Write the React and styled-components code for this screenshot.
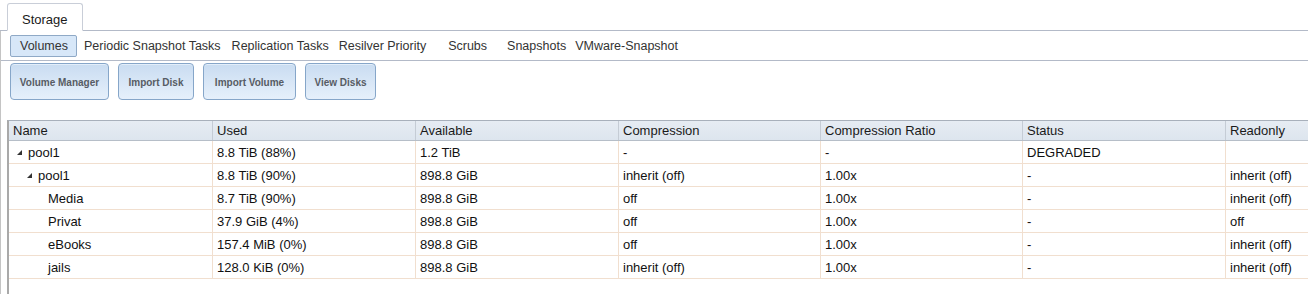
import React from "react";
import styled, { createGlobalStyle } from "styled-components";

const GlobalStyle = createGlobalStyle`
    html, body {
        margin: 0;
        padding: 0;
        background: #fff;
        overflow: hidden;
    }
    body {
        font-family: "Liberation Sans", Arial, sans-serif;
        color: #1a1a1a;
    }
`;

const subTabs = [
    { label: "Volumes", active: true, gap: 0 },
    { label: "Periodic Snapshot Tasks", gap: 2 },
    { label: "Replication Tasks", gap: 1 },
    { label: "Resilver Priority", gap: 0 },
    { label: "Scrubs", gap: 12 },
    { label: "Snapshots", gap: 10 },
    { label: "VMware-Snapshot", gap: -1 },
];

const buttons = [
    { label: "Volume Manager", width: 99 },
    { label: "Import Disk", width: 76 },
    { label: "Import Volume", width: 93 },
    { label: "View Disks", width: 71 },
];

const columns = [
    { key: "name", title: "Name", width: 204 },
    { key: "used", title: "Used", width: 203 },
    { key: "avail", title: "Available", width: 203 },
    { key: "comp", title: "Compression", width: 202 },
    { key: "ratio", title: "Compression Ratio", width: 202 },
    { key: "status", title: "Status", width: 203 },
    { key: "ro", title: "Readonly", width: 203 },
];

const rows = [
    { name: "pool1", level: 0, open: true, used: "8.8 TiB (88%)", avail: "1.2 TiB", comp: "-", ratio: "-", status: "DEGRADED", ro: "" },
    { name: "pool1", level: 1, open: true, used: "8.8 TiB (90%)", avail: "898.8 GiB", comp: "inherit (off)", ratio: "1.00x", status: "-", ro: "inherit (off)" },
    { name: "Media", level: 2, used: "8.7 TiB (90%)", avail: "898.8 GiB", comp: "off", ratio: "1.00x", status: "-", ro: "inherit (off)" },
    { name: "Privat", level: 2, used: "37.9 GiB (4%)", avail: "898.8 GiB", comp: "off", ratio: "1.00x", status: "-", ro: "off" },
    { name: "eBooks", level: 2, used: "157.4 MiB (0%)", avail: "898.8 GiB", comp: "off", ratio: "1.00x", status: "-", ro: "inherit (off)" },
    { name: "jails", level: 2, used: "128.0 KiB (0%)", avail: "898.8 GiB", comp: "inherit (off)", ratio: "1.00x", status: "-", ro: "inherit (off)" },
];

const gridCols = columns.map((c) => `${c.width}px`).join(" ");

export default function App() {
    return (
        <>
            <GlobalStyle />
            <TabStrip>
                <MainTab>Storage</MainTab>
            </TabStrip>
            <Panel>
                <SubTabBar>
                    {subTabs.map((t) => (
                        <SubTab key={t.label} $active={t.active} $gap={t.gap}>
                            {t.label}
                        </SubTab>
                    ))}
                </SubTabBar>
                <Toolbar>
                    {buttons.map((b) => (
                        <ActionButton key={b.label} $width={b.width}>
                            {b.label}
                        </ActionButton>
                    ))}
                </Toolbar>
                <Grid>
                    <HeaderRow $cols={gridCols}>
                        {columns.map((c) => (
                            <HeaderCell key={c.key}>{c.title}</HeaderCell>
                        ))}
                    </HeaderRow>
                    {rows.map((r, i) => (
                        <Row key={i} $cols={gridCols}>
                            <Cell>
                                <Indent $level={r.level} />
                                <Expander>
                                    {r.open && (
                                        <svg width="5" height="5" viewBox="0 0 5 5">
                                            <polygon points="5,0 5,5 0,5" fill="#333" />
                                        </svg>
                                    )}
                                </Expander>
                                {r.name}
                            </Cell>
                            <Cell>{r.used}</Cell>
                            <Cell>{r.avail}</Cell>
                            <Cell>{r.comp}</Cell>
                            <Cell>{r.ratio}</Cell>
                            <Cell>{r.status}</Cell>
                            <Cell>{r.ro}</Cell>
                        </Row>
                    ))}
                </Grid>
            </Panel>
        </>
    );
}

const TabStrip = styled.div`
    display: flex;
    align-items: flex-end;
    height: 30px;
    padding-left: 7px;
    border-bottom: 1px solid #b3bac8;
`;

const MainTab = styled.div`
    display: flex;
    align-items: center;
    height: 28px;
    box-sizing: border-box;
    padding: 4px 14px 0;
    margin-bottom: -1px;
    background: #fff;
    border: 1px solid #c9ced8;
    border-bottom: 1px solid #fff;
    border-radius: 3px 3px 0 0;
    font-size: 13px;
    color: #1a1a1a;
`;

const Panel = styled.div`
    border-left: 1px solid #c4c4c4;
`;

const SubTabBar = styled.div`
    display: flex;
    align-items: center;
    height: 29px;
    padding-left: 9px;
    border-bottom: 1px solid #b3bac8;
`;

const SubTab = styled.div`
    display: flex;
    align-items: center;
    height: 22px;
    box-sizing: border-box;
    margin-left: ${(p) => p.$gap}px;
    padding: ${(p) => (p.$active ? "0 8px 0 9px" : "0 4px")};
    font-size: 12.5px;
    color: #333;
    background: ${(p) => (p.$active ? "#d7e7f8" : "transparent")};
    border: 1px solid ${(p) => (p.$active ? "#8fa9c6" : "transparent")};
    border-radius: 2px;
    white-space: nowrap;
`;

const Toolbar = styled.div`
    display: flex;
    gap: 9px;
    height: 59px;
    padding: 2px 0 0 9px;
    box-sizing: border-box;
`;

const ActionButton = styled.div`
    display: flex;
    align-items: center;
    justify-content: center;
    width: ${(p) => p.$width}px;
    height: 37px;
    box-sizing: border-box;
    padding-top: 1px;
    border: 1px solid #86a6c9;
    border-radius: 4px;
    background: linear-gradient(#c9dcf1, #e6f0fb);
    box-shadow: inset 0 1px 0 #e3eefa;
    font-size: 10px;
    font-weight: bold;
    color: #575c64;
    white-space: nowrap;
`;

const Grid = styled.div`
    margin-left: 6px;
    height: 173px;
    border-left: 2px solid #a9a9a9;
    border-top: 1px solid #a8b0bb;
`;

const HeaderRow = styled.div`
    display: grid;
    grid-template-columns: ${(p) => p.$cols};
    height: 19px;
    background: linear-gradient(#e6ecf3, #dde5ee);
    border-bottom: 1px solid #b6bec8;
`;

const HeaderCell = styled.div`
    display: flex;
    align-items: center;
    padding-left: 4px;
    font-size: 13px;
    color: #1a1a1a;
    border-right: 1px solid #c5ccd5;
    white-space: nowrap;
    overflow: hidden;
`;

const Row = styled.div`
    display: grid;
    grid-template-columns: ${(p) => p.$cols};
    height: 23px;
    box-sizing: border-box;
    border-bottom: 1px solid #f1dfcf;
`;

const Cell = styled.div`
    display: flex;
    align-items: center;
    padding-left: 4px;
    font-size: 13px;
    color: #111;
    border-right: 1px solid #f1dfcf;
    white-space: nowrap;
    overflow: hidden;
`;

const Indent = styled.span`
    display: inline-block;
    flex: none;
    width: ${(p) => 4 + p.$level * 10}px;
`;

const Expander = styled.span`
    display: inline-flex;
    align-items: center;
    flex: none;
    width: 11px;
    height: 5px;
`;
